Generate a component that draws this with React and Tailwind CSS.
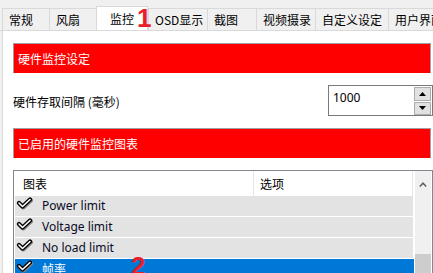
import React from "react";

const cjk = { fontFamily: '"Noto Sans CJK SC", "Noto Sans", sans-serif' };
const latin = { fontFamily: '"Noto Sans", "Noto Sans CJK SC", sans-serif' };

function Tab({ label, w, selected }) {
  if (selected) {
    return (
      <div
        className={`shrink-0 h-[25px] bg-white border border-b-0 border-[#d9d9d9] flex items-center justify-center text-[12px] text-black pb-[1px] relative z-10 -mb-[1px]`}
        style={{ width: w, ...cjk }}
      >
        {label}
      </div>
    );
  }
  return (
    <div
      className="shrink-0 h-[22px] bg-[#f0f0f0] border border-r-0 border-b-0 border-[#d9d9d9] flex items-center pl-[6px] text-[12px] text-black whitespace-nowrap overflow-hidden"
      style={{ width: w, ...cjk }}
    >
      {label}
    </div>
  );
}

function Check() {
  const d = "M3 6 L6.5 9.5 L14 2.5";
  return (
    <svg width="17" height="13" viewBox="0 0 17 13" className="shrink-0">
      <path d={d} fill="none" stroke="#8a8a8a" strokeWidth="4.2" strokeLinecap="round" strokeLinejoin="round" transform="translate(0.9,0.9)" />
      <path d={d} fill="none" stroke="#000" strokeWidth="4.2" strokeLinecap="round" strokeLinejoin="round" />
      <path d={d} fill="none" stroke="#fff" strokeWidth="1.6" strokeLinecap="round" strokeLinejoin="round" />
    </svg>
  );
}

function Row({ label, selected, cjkText }) {
  return (
    <div
      className={`h-[21px] border-b border-white flex items-start ${selected ? "bg-[#0078d7] text-white w-[399px]" : "bg-[#e3e3e3] text-[#0a0a28] w-[398px]"}`}
    >
      <div className="w-[27px] pl-[1px] pt-[1px]">
        <Check />
      </div>
      <span className="text-[12px] leading-[20px]" style={cjkText ? cjk : latin}>
        {label}
      </span>
    </div>
  );
}

export default function App() {
  return (
    <div className="w-[433px] h-[273px] overflow-hidden bg-[#f0f0f0] relative" style={cjk}>
      {/* tab strip */}
      <div className="h-[31px] flex items-end pl-[2px] border-b border-[#d9d9d9] overflow-hidden">
        <Tab label="常规" w={47} />
        <Tab label="风扇" w={47} />
        <Tab label="监控" w={52} selected />
        <Tab label="OSD显示" w={59} />
        <Tab label="截图" w={49} />
        <Tab label="视频摄录" w={59} />
        <Tab label="自定义设定" w={73} />
        <Tab label="用户界面" w={60} />
      </div>

      {/* content */}
      <div className="ml-[2px] border-l border-[#d9d9d9] bg-white h-[242px] pl-[10px] pt-[12px]">
        <div className="w-[418px] h-[30px] bg-[#ff0000] border border-[#a0a0a0] border-b-0 text-white text-[12px] flex items-center pl-[4px]">
          硬件监控设定
        </div>

        <div className="flex items-start mt-[12px] h-[31px]">
          <div className="text-[12px] text-black mt-[8px] w-[315px]">硬件存取间隔 (毫秒)</div>
          <div className="w-[105px] h-[31px] border border-[#7a7a7a] flex">
            <div className="flex-1 text-[12px] text-black pl-[4px] pt-[3px]" style={latin}>1000</div>
            <div className="w-[17px] flex flex-col gap-[1px] pt-[1px] mr-[1px]">
              <div className="h-[14px] bg-[#e1e1e1] border border-[#adadad] flex items-center justify-center">
                <svg width="7" height="4" viewBox="0 0 7 4"><path d="M0 4 L3.5 0 L7 4Z" fill="#000" /></svg>
              </div>
              <div className="h-[14px] bg-[#e1e1e1] border border-[#adadad] flex items-center justify-center">
                <svg width="7" height="4" viewBox="0 0 7 4"><path d="M0 0 L3.5 4 L7 0Z" fill="#000" /></svg>
              </div>
            </div>
          </div>
        </div>

        <div className="w-[418px] h-[30px] bg-[#ff0000] border border-[#a0a0a0] border-b-0 text-white text-[12px] flex items-center pl-[4px] mt-[12px]">
          已启用的硬件监控图表
        </div>

        <div className="mt-[12px] w-[420px] h-[103px] border-l border-t border-r border-[#828790] flex">
          <div className="flex-1 pl-[1px]">
            <div className="h-[25px] w-[398px] flex border-b-0">
              <div className="w-[239px] border-r border-[#e5e5e5] text-[12px] text-black pl-[8px] leading-[25px]">图表</div>
              <div className="flex-1 border-r border-[#e5e5e5] text-[12px] text-black pl-[6px] leading-[25px]">选项</div>
            </div>
            <Row label="Power limit" />
            <Row label="Voltage limit" />
            <Row label="No load limit" />
            <Row label="帧率" selected cjkText />
          </div>
          <div className="w-[16px] bg-[#f0f0f0] mr-[1px] flex flex-col">
            <div className="h-[20px] flex items-center justify-center pt-[6px]">
              <svg width="8" height="5" viewBox="0 0 8 5"><path d="M0.8 4.5 L4 1.2 L7.2 4.5" fill="none" stroke="#606060" strokeWidth="1.5" /></svg>
            </div>
            <div className="mt-[63px] flex-1 bg-[#cdcdcd]" />
          </div>
        </div>
      </div>

      {/* annotations */}
      <div
        className="absolute z-20 left-[137px] top-[5px] text-[26px] font-bold text-[#e8202a] leading-none"
        style={{ fontFamily: '"Liberation Sans", sans-serif' }}
      >
        1
      </div>
      <div
        className="absolute z-20 left-[131px] top-[253px] text-[26px] font-bold text-[#e8202a] leading-none"
        style={{ fontFamily: '"Liberation Sans", sans-serif' }}
      >
        2
      </div>
    </div>
  );
}
